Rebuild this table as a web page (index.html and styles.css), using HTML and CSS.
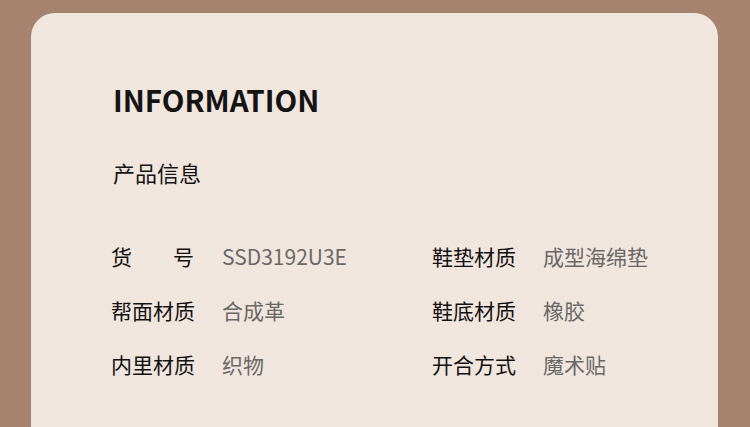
FILE: index.html
```html
<!DOCTYPE html>
<html lang="zh-CN">
<head>
<meta charset="utf-8">
<link rel="stylesheet" href="styles.css">
</head>
<body>
<div class="card">
  <h1 class="title">INFORMATION</h1>
  <h2 class="subtitle">产品信息</h2>
  <div class="specs">
    <div class="spec"><span class="label label-spread"><span>货</span><span>号</span></span><span class="value">SSD3192U3E</span></div>
    <div class="spec"><span class="label">鞋垫材质</span><span class="value">成型海绵垫</span></div>
    <div class="spec"><span class="label">帮面材质</span><span class="value">合成革</span></div>
    <div class="spec"><span class="label">鞋底材质</span><span class="value">橡胶</span></div>
    <div class="spec"><span class="label">内里材质</span><span class="value">织物</span></div>
    <div class="spec"><span class="label">开合方式</span><span class="value">魔术贴</span></div>
  </div>
</div>
</body>
</html>
```
FILE: styles.css
```css
html, body {
  margin: 0;
  padding: 0;
}
body {
  background: #a5836f;
  width: 750px;
  height: 427px;
  overflow: hidden;
  font-family: "Noto Sans CJK SC", "Noto Sans", sans-serif;
}
.card {
  margin: 13px 32px 0 31px;
  height: 480px;
  background: #f1e6de;
  border-radius: 24px;
  padding: 66px 0 0 82px;
  box-sizing: border-box;
}
.title {
  margin: 0;
  font-size: 29.5px;
  line-height: 40px;
  font-weight: 700;
  color: #141414;
}
.subtitle {
  margin: 38px 0 0 0;
  font-size: 22px;
  line-height: 30px;
  font-weight: 400;
  color: #141414;
}
.specs {
  margin-top: 54px;
  margin-left: -2px;
  display: grid;
  grid-template-columns: 321px 1fr;
  row-gap: 24px;
}
.spec {
  display: flex;
  font-size: 21px;
  line-height: 30px;
}
.label {
  width: 111px;
  flex: none;
  color: #111;
  font-weight: 400;
}
.label-spread {
  display: flex;
  justify-content: space-between;
  width: 83px;
  margin-right: 28px;
}
.value {
  color: #6a6866;
}
```
